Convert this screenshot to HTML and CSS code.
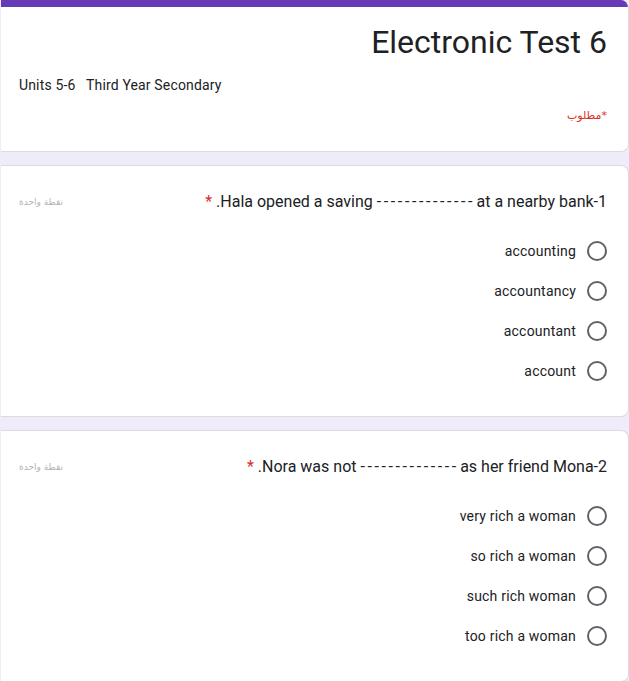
FILE: index.html
```html
<!DOCTYPE html>
<html lang="ar" dir="rtl">
<head>
<meta charset="utf-8">
<title>Electronic Test 6</title>
<link rel="stylesheet" href="styles.css">
</head>
<body>
<div class="form">
  <div class="card header-card">
    <div class="top-bar"></div>
    <div class="header-body">
      <h1 class="form-title">Electronic Test 6</h1>
      <div class="form-desc" dir="ltr">Units 5-6   Third Year Secondary</div>
      <div class="required-note">*مطلوب</div>
    </div>
  </div>

  <div class="card question">
    <div class="q-head">
      <div class="q-title"><span>1-Hala opened a saving <span class="blank">-------------</span>- at a nearby bank.</span><span class="star"> *</span></div>
      <div class="q-points">نقطة واحدة</div>
    </div>
    <div class="options">
      <label class="option"><span class="radio"></span><span class="opt-text">accounting</span></label>
      <label class="option"><span class="radio"></span><span class="opt-text">accountancy</span></label>
      <label class="option"><span class="radio"></span><span class="opt-text">accountant</span></label>
      <label class="option"><span class="radio"></span><span class="opt-text">account</span></label>
    </div>
  </div>

  <div class="card question">
    <div class="q-head">
      <div class="q-title"><span>2-Nora was not <span class="blank">-------------</span>- as her friend Mona.</span><span class="star"> *</span></div>
      <div class="q-points">نقطة واحدة</div>
    </div>
    <div class="options">
      <label class="option"><span class="radio"></span><span class="opt-text">very rich a woman</span></label>
      <label class="option"><span class="radio"></span><span class="opt-text">so rich a woman</span></label>
      <label class="option"><span class="radio"></span><span class="opt-text">such rich woman</span></label>
      <label class="option"><span class="radio"></span><span class="opt-text">too rich a woman</span></label>
    </div>
  </div>
</div>
</body>
</html>
```
FILE: styles.css
```css
html, body {
  margin: 0;
  padding: 0;
}
body {
  background: #f0ebf8;
  font-family: Roboto, "DejaVu Sans", sans-serif;
  color: #202124;
  overflow: hidden;
}
.form {
  display: flex;
  flex-direction: column;
  gap: 13px;
  width: 628px;
}
.card {
  background: #fff;
  border: 1px solid #dadce0;
  border-left: none;
  border-radius: 0 8px 8px 0;
  box-sizing: border-box;
}
.header-card {
  border-top: none;
  overflow: hidden;
}
.top-bar {
  height: 7px;
  background: #673ab7;
}
.header-body {
  padding: 15px 21px 25px 18px;
}
.form-title {
  margin: 0;
  font-family: Roboto, sans-serif;
  font-weight: 400;
  font-size: 32px;
  line-height: 40px;
  color: #202124;
}
.form-desc {
  margin-top: 13px;
  font-size: 14px;
  line-height: 20px;
  letter-spacing: 0.15px;
  white-space: pre;
  text-align: left;
}
.required-note {
  margin-top: 11px;
  font-family: "DejaVu Sans", sans-serif;
  font-size: 11px;
  line-height: 20px;
  color: #d93025;
}
.question {
  padding: 24px 21px 25px 18px;
}
.q-head {
  display: flex;
  justify-content: space-between;
  align-items: center;
  height: 24px;
}
.q-title {
  font-size: 16px;
  line-height: 24px;
  color: #202124;
}
.blank {
  letter-spacing: 2.6px;
}
.star {
  color: #d93025;
}
.q-points {
  font-family: "DejaVu Sans", sans-serif;
  font-size: 9px;
  color: #b0b4b8;
}
.options {
  margin-top: 17px;
  display: flex;
  flex-direction: column;
}
.option {
  display: flex;
  align-items: center;
  height: 40px;
  gap: 11px;
}
.radio {
  width: 20px;
  height: 20px;
  box-sizing: border-box;
  border: 2px solid #5f6368;
  border-radius: 50%;
  flex: none;
}
.opt-text {
  font-size: 14px;
  line-height: 20px;
  letter-spacing: 0.2px;
  color: #202124;
}
```
